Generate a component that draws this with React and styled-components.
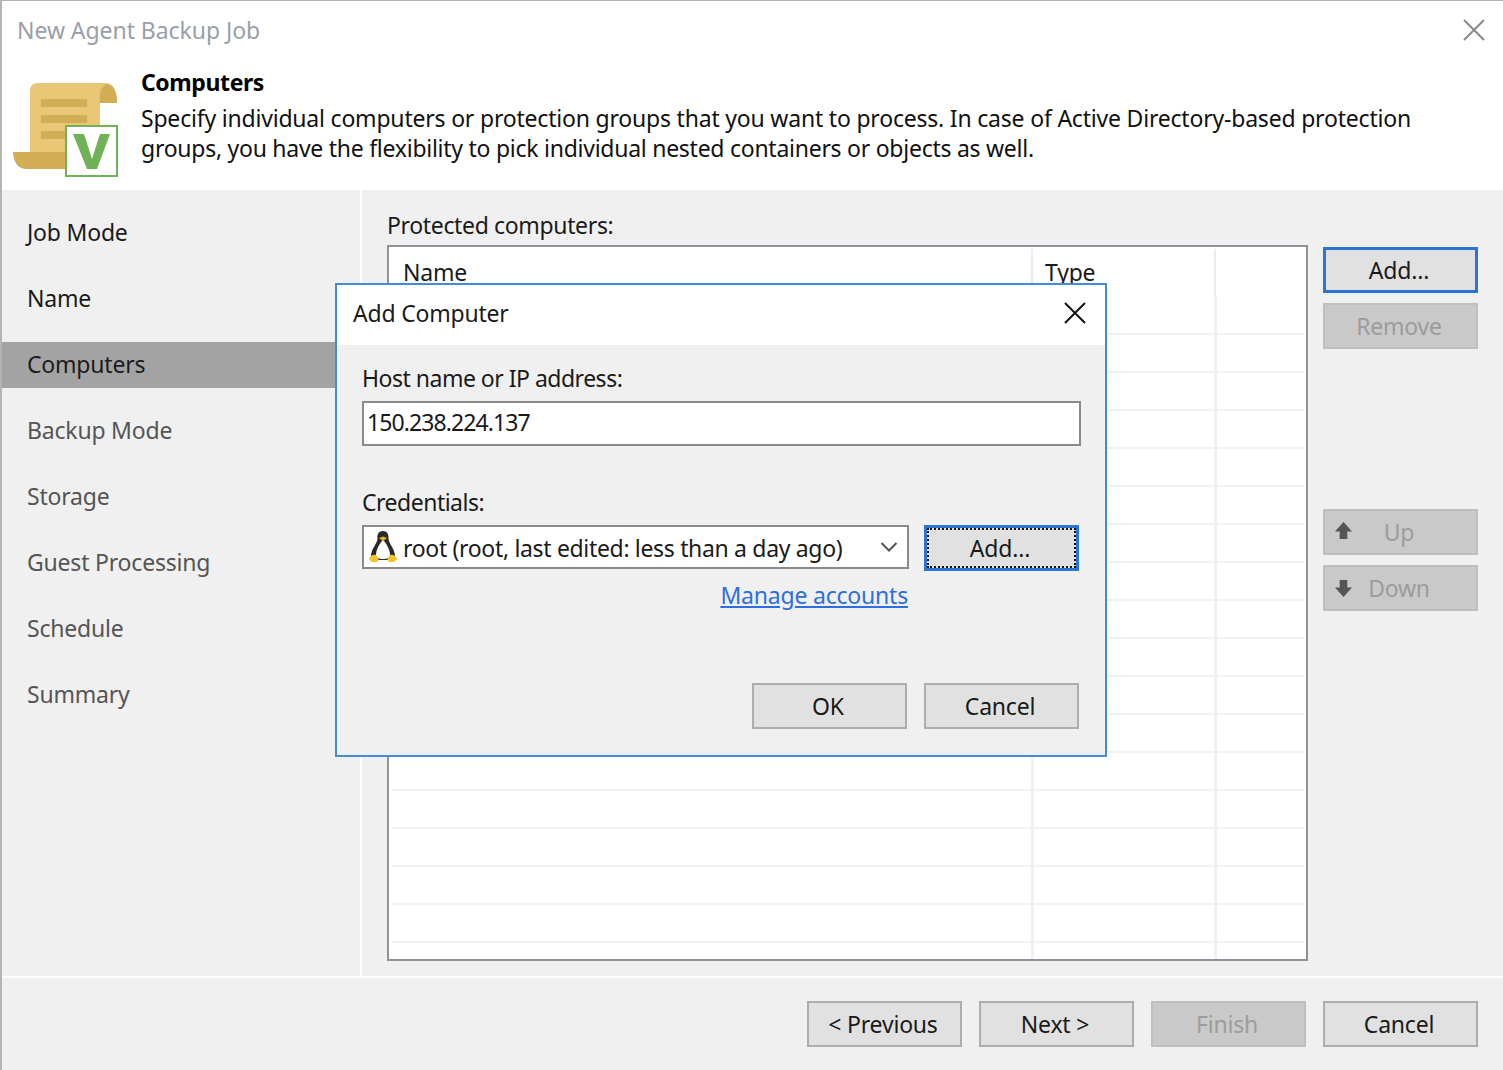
import styled, { createGlobalStyle } from "styled-components";

const GlobalStyle = createGlobalStyle`
  html, body {
    margin: 0;
    padding: 0;
    background: #f0f0f0;
  }
  * {
    box-sizing: border-box;
  }
`;

const steps = [
  { label: "Job Mode" },
  { label: "Name" },
  { label: "Computers", active: true },
  { label: "Backup Mode", muted: true },
  { label: "Storage", muted: true },
  { label: "Guest Processing", muted: true },
  { label: "Schedule", muted: true },
  { label: "Summary", muted: true },
];

const rowCount = 18;

const ScrollIcon = () => (
  <svg width="106" height="96" viewBox="0 0 106 96">
    <path d="M17 10 Q17 2 25 2 H92 Q104 2 104 22 H87 V88 H17 Z" fill="#e9c777" />
    <path d="M87 22 Q85 6 94 3 Q104 5 104 22 Z" fill="#d2ad55" />
    <rect x="28" y="18" width="46" height="8" fill="#d2ad55" />
    <rect x="28" y="34" width="46" height="8" fill="#d2ad55" />
    <rect x="28" y="50" width="46" height="8" fill="#d2ad55" />
    <path d="M0 71 H60 V88 H14 Q1 88 0 71 Z" fill="#d2ad55" />
    <rect x="53" y="45" width="51" height="50" fill="#fff" stroke="#6fb356" strokeWidth="2" />
    <path d="M60 53 H71 L79 78 L87 53 H97 L84 88 H74 Z" fill="#6fb356" />
  </svg>
);

const CloseIcon = ({ size, color }) => (
  <svg width={size} height={size} viewBox="0 0 22 22">
    <path d="M1 1 L21 21 M21 1 L1 21" stroke={color} strokeWidth="2" fill="none" />
  </svg>
);

const TuxIcon = () => (
  <svg width="30" height="34" viewBox="0 0 30 34">
    <path d="M15 1 C10 1 9 5 9.500 9 C9.500 13 3 19 3 26 C3 29 8 30 15 30 C22 30 27 29 27 26 C27 19 20.500 13 20.500 9 C20.500 5 20 1 15 1 Z" fill="#2a2a2a" />
    <path d="M15 10 C12 13 8 19 8 25 C8 28 11 29 15 29 C19 29 22 28 22 25 C22 19 18 13 15 10 Z" fill="#fff" />
    <path d="M11 8 L15 6.500 L19 8 L15 11 Z" fill="#e8b52a" />
    <path d="M1 29 C2 25 6 24 8 25 C10 27 11 30 10 31 C8 33 3 33 1 29 Z" fill="#f0c42e" />
    <path d="M29 29 C28 25 24 24 22 25 C20 27 19 30 20 31 C22 33 27 33 29 29 Z" fill="#f0c42e" />
  </svg>
);

const ArrowIcon = ({ down }) => (
  <ArrowSvg $down={down} viewBox="0 0 20 20" width="19" height="19">
    <path
      d={down ? "M6 1 H14 V9 H19 L10 19 L1 9 H6 Z" : "M10 1 L19 11 H14 V19 H6 V11 H1 Z"}
      fill="#555"
    />
  </ArrowSvg>
);

const App = () => {
  return (
    <Page>
      <GlobalStyle />
      <Header>
        <Title>New Agent Backup Job</Title>
        <WindowClose>
          <CloseIcon size={22} color="#8a8a8a" />
        </WindowClose>
        <HeaderInfo>
          <IconSlot>
            <ScrollIcon />
          </IconSlot>
          <div>
            <Heading>Computers</Heading>
            <Description>
              Specify individual computers or protection groups that you want to process. In case of Active Directory-based protection
              <br />
              <SecondLine>groups, you have the flexibility to pick individual nested containers or objects as well.</SecondLine>
            </Description>
          </div>
        </HeaderInfo>
      </Header>

      <Body>
        <Sidebar>
          {steps.map((step) => (
            <Step key={step.label} $active={step.active} $muted={step.muted}>
              {step.label}
            </Step>
          ))}
        </Sidebar>

        <Content>
          <ListColumn>
            <Label>Protected computers:</Label>
            <Table>
              <TableHead>
                <NameHead>Name</NameHead>
                <TypeHead>Type</TypeHead>
                <Head />
              </TableHead>
              {Array.from({ length: rowCount }).map((_, i) => (
                <Row key={i}>
                  <NameCell />
                  <TypeCell />
                </Row>
              ))}
            </Table>
          </ListColumn>

          <SideButtons>
            <Button $focus>Add...</Button>
            <Button $disabled>Remove</Button>
            <Spacer />
            <Button $disabled>
              <ArrowIcon />
              Up
            </Button>
            <Button $disabled>
              <ArrowIcon down />
              Down
            </Button>
          </SideButtons>
        </Content>
      </Body>

      <Footer>
        <Button>&lt; Previous</Button>
        <Button>Next &gt;</Button>
        <Button $disabled>Finish</Button>
        <Button>Cancel</Button>
      </Footer>

      <Dialog>
        <DialogTitle>
          Add Computer
          <CloseIcon size={22} color="#111" />
        </DialogTitle>
        <DialogBody>
          <FieldLabel>Host name or IP address:</FieldLabel>
          <TextBox>150.238.224.137</TextBox>
          <CredentialsLabel>Credentials:</CredentialsLabel>
          <CredentialsRow>
            <Select>
              <TuxIcon />
              <SelectText>root (root, last edited: less than a day ago)</SelectText>
              <svg width="18" height="12" viewBox="0 0 18 12">
                <path d="M1.500 2 L9 9.500 L16.500 2" stroke="#555" strokeWidth="2" fill="none" />
              </svg>
            </Select>
            <Button $focus $dotted>Add...</Button>
          </CredentialsRow>
          <ManageRow>
            <ManageLink>Manage accounts</ManageLink>
          </ManageRow>
          <DialogActions>
            <Button>OK</Button>
            <Button>Cancel</Button>
          </DialogActions>
        </DialogBody>
      </Dialog>
    </Page>
  );
};

export default App;

const Page = styled.div`
  position: relative;
  width: 1503px;
  height: 1070px;
  overflow: hidden;
  display: flex;
  flex-direction: column;
  background: #f0f0f0;
  border-left: 2px solid #b4b4b4;
  border-top: 1px solid #b4b4b4;
  font-family: "Noto Sans", "Open Sans", sans-serif;
  font-size: 23px;
  letter-spacing: -0.2px;
  color: #1a1a1a;
`;

const Header = styled.header`
  position: relative;
  height: 189px;
  flex: none;
  background: #fff;
  padding: 11px 15px 0;
`;

const Title = styled.div`
  line-height: 36px;
  letter-spacing: -0.05px;
  color: #9aa0a8;
`;

const WindowClose = styled.div`
  position: absolute;
  top: 18px;
  right: 18px;
  display: flex;
`;

const HeaderInfo = styled.div`
  display: flex;
  margin-top: 18px;
`;

const IconSlot = styled.div`
  width: 128px;
  flex: none;
  margin-left: -4px;
  padding-top: 15px;
`;

const Heading = styled.div`
  font-weight: 700;
  line-height: 32px;
  letter-spacing: -0.4px;
  color: #000;
`;

const Description = styled.div`
  line-height: 30px;
  margin-top: 5px;
  color: #111;
  white-space: nowrap;
`;

const SecondLine = styled.span`
  letter-spacing: -0.26px;
`;

const Body = styled.main`
  flex: 1;
  display: flex;
  min-height: 0;
`;

const Sidebar = styled.nav`
  width: 362px;
  flex: none;
  padding-top: 20px;
  display: flex;
  flex-direction: column;
  gap: 20px;
  border-right: 2px solid #fff;
  margin-left: -2px;
`;

const Step = styled.div`
  height: 46px;
  padding: 0 0 3px 27px;
  display: flex;
  align-items: center;
  background: ${(p) => (p.$active ? "#a3a3a3" : "transparent")};
  color: ${(p) => (p.$active ? "#1c1c1c" : p.$muted ? "#555" : "#1a1a1a")};
`;

const Content = styled.section`
  flex: 1;
  display: flex;
  gap: 15px;
  padding: 19px 25px 15px 25px;
`;

const ListColumn = styled.div`
  width: 921px;
  flex: none;
  display: flex;
  flex-direction: column;
`;

const Label = styled.div`
  line-height: 36px;
  margin-top: -2px;
  margin-bottom: 2px;
  letter-spacing: -0.35px;
`;

const Table = styled.div`
  flex: 1;
  display: flex;
  flex-direction: column;
  overflow: hidden;
  background: #fff;
  border: 2px solid #8f9399;
  padding: 2px 2px 2px 2px;
`;

const TableHead = styled.div`
  height: 48px;
  flex: none;
  display: flex;
  line-height: 46px;
`;

const Head = styled.div`
  padding-left: 12px;
  flex: 1;
`;

const NameHead = styled(Head)`
  width: 642px;
  flex: none;
  border-right: 2px solid #ececec;
`;

const TypeHead = styled(Head)`
  width: 183px;
  flex: none;
  border-right: 2px solid #ececec;
`;

const Row = styled.div`
  height: 38px;
  flex: none;
  display: flex;
  border-bottom: 2px solid #f2f2f2;

  &:last-child {
    height: 14px;
    border-bottom: none;
  }
`;

const NameCell = styled.div`
  width: 643px;
  flex: none;
  border-right: 3px solid #edf2f8;
  margin-bottom: -2px;
`;

const TypeCell = styled.div`
  width: 183px;
  flex: none;
  border-right: 3px solid #edf2f8;
  margin-bottom: -2px;
`;

const SideButtons = styled.div`
  width: 155px;
  flex: none;
  padding-top: 38px;
  display: flex;
  flex-direction: column;
  gap: 10px;
`;

const Spacer = styled.div`
  height: 140px;
`;

const Button = styled.button`
  position: relative;
  width: 155px;
  height: 46px;
  flex: none;
  padding: 0 3px 0 0;
  display: flex;
  align-items: center;
  justify-content: center;
  font-family: inherit;
  font-size: 23px;
  letter-spacing: -0.2px;
  color: ${(p) => (p.$disabled ? "#9c9c9c" : "#1a1a1a")};
  background: ${(p) => (p.$disabled ? "#c9c9c9" : "#e1e1e1")};
  border: ${(p) => (p.$focus ? "3px solid #2b74cf" : p.$disabled ? "2px solid #bfbfbf" : "2px solid #adadad")};
  ${(p) => p.$dotted && "outline: 2px dotted #111; outline-offset: -5px;"}
`;

const ArrowSvg = styled.svg`
  position: absolute;
  left: 9px;
  top: ${(p) => (p.$down ? "12px" : "10px")};
`;

const Footer = styled.footer`
  height: 94px;
  flex: none;
  display: flex;
  justify-content: flex-end;
  gap: 17px;
  padding: 23px 25px 0 0;
  border-top: 2px solid #fff;
`;

const Dialog = styled.div`
  position: absolute;
  left: 333px;
  top: 282px;
  width: 772px;
  height: 474px;
  display: flex;
  flex-direction: column;
  border: 2px solid #3f8fd6;
  background: #f0f0f0;
`;

const DialogTitle = styled.div`
  height: 60px;
  flex: none;
  display: flex;
  align-items: center;
  justify-content: space-between;
  padding: 0 19px 4px 16px;
  background: #fff;
`;

const DialogBody = styled.div`
  flex: 1;
  display: flex;
  flex-direction: column;
  padding: 15px 26px 0 25px;
`;

const FieldLabel = styled.div`
  line-height: 36px;
  letter-spacing: -0.5px;
`;

const CredentialsLabel = styled(FieldLabel)`
  margin-top: 38px;
`;

const TextBox = styled.div`
  height: 45px;
  margin-top: 5px;
  width: 719px;
  padding: 0 0 4px 3px;
  display: flex;
  align-items: center;
  letter-spacing: -0.9px;
  background: #fff;
  border: 2px solid #8a8a8a;
`;

const CredentialsRow = styled.div`
  display: flex;
  gap: 15px;
  margin-top: 5px;
`;

const Select = styled.div`
  width: 547px;
  height: 44px;
  padding: 0 9px 0 4px;
  display: flex;
  align-items: center;
  gap: 5px;
  background: #fff;
  border: 2px solid #8a8a8a;
`;

const SelectText = styled.span`
  flex: 1;
  white-space: nowrap;
  letter-spacing: -0.33px;
  padding-top: 1px;
`;

const ManageRow = styled.div`
  width: 546px;
  display: flex;
  justify-content: flex-end;
  margin-top: 6px;
`;

const ManageLink = styled.a`
  color: #2b6fe0;
  text-decoration: underline;
  line-height: 36px;
`;

const DialogActions = styled.div`
  display: flex;
  justify-content: flex-end;
  gap: 17px;
  margin-top: 70px;
`;
